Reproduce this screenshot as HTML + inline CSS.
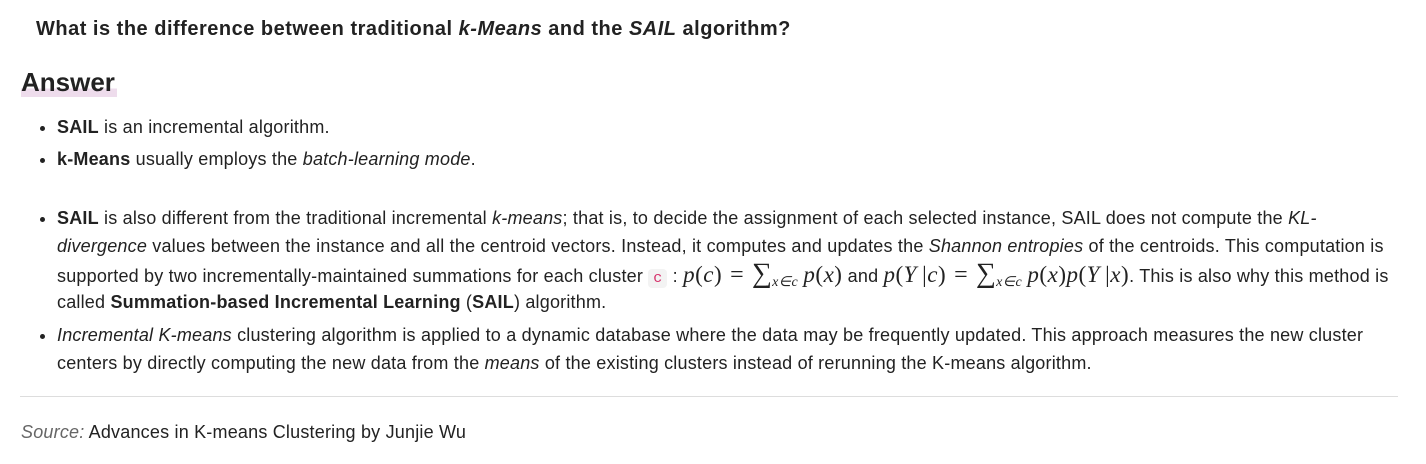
<!DOCTYPE html>
<html><head><meta charset="utf-8"><style>
body{margin:0;background:#fff;font-family:"Liberation Sans",Arial,sans-serif;color:#222;width:1426px;height:464px;overflow:hidden;position:relative}
.t{position:absolute;left:36px;top:18px;font-size:20px;letter-spacing:0.5px;font-weight:bold;white-space:nowrap}
.h{position:absolute;left:21px;top:67px;font-size:26px;font-weight:bold;line-height:30px;background:linear-gradient(transparent 72%,#eedcec 72%);padding-right:2px}
ul{position:absolute;left:0;margin:0;padding-left:57px;font-size:18px;letter-spacing:0.2px;width:1360px}
li{white-space:nowrap}
.l1 li{line-height:32px}
.l2 li{line-height:28px}
.m{font-family:"Liberation Serif",serif;font-style:italic;font-size:23px;letter-spacing:0.5px;line-height:1}
.n{font-style:normal}
.e{font-family:"Liberation Serif",serif;font-size:24px;padding:0 8px;line-height:1}
.code{font-family:"Liberation Mono",monospace;color:#d6336c;background:#f3f3f3;border-radius:4px;padding:1px 5px;font-size:15px;line-height:1}
sub{line-height:0;vertical-align:-4px}
.hr{position:absolute;left:20px;top:396px;width:1378px;border-top:1px solid #ddd}
.s{position:absolute;left:21px;top:422px;font-size:18px;letter-spacing:0.2px;white-space:nowrap}
.ml{display:inline-block;height:28px;vertical-align:top}
</style></head><body>
<div class="t">What is the difference between traditional <i>k-Means</i> and the <i>SAIL</i> algorithm?</div>
<div class="h">Answer</div>
<ul class="l1" style="top:111px"><li><b>SAIL</b> is an incremental algorithm.</li><li><b>k-Means</b> usually employs the <i>batch-learning mode</i>.</li></ul>
<ul class="l2" style="top:204px">
<li><b>SAIL</b> is also different from the traditional incremental <i>k-means</i>; that is, to decide the assignment of each selected instance, SAIL does not compute the <i>KL-</i><br><i>divergence</i> values between the instance and all the centroid vectors. Instead, it computes and updates the <i>Shannon entropies</i> of the centroids. This computation is<br><span class="ml">supported by two incrementally-maintained summations for each cluster <span class="code">c</span> : <span class="m">p</span><span class="m n">(</span><span class="m">c</span><span class="m n">)</span><span class="e">=</span><span class="e" style="padding:0;font-size:28px">∑</span><sub class="m" style="font-size:14px">x∈c</sub> <span class="m">p</span><span class="m n">(</span><span class="m">x</span><span class="m n">)</span> and <span class="m">p</span><span class="m n">(</span><span class="m">Y</span> <span class="m n">|</span><span class="m">c</span><span class="m n">)</span><span class="e">=</span><span class="e" style="padding:0;font-size:28px">∑</span><sub class="m" style="font-size:14px">x∈c</sub> <span class="m">p</span><span class="m n">(</span><span class="m">x</span><span class="m n">)</span><span class="m">p</span><span class="m n">(</span><span class="m">Y</span> <span class="m n">|</span><span class="m">x</span><span class="m n">)</span>. This is also why this method is</span><br>called <b>Summation-based Incremental Learning</b> (<b>SAIL</b>) algorithm.</li>
<li style="margin-top:5px"><i>Incremental K-means</i> clustering algorithm is applied to a dynamic database where the data may be frequently updated. This approach measures the new cluster<br>centers by directly computing the new data from the <i>means</i> of the existing clusters instead of rerunning the K-means algorithm.</li>
</ul>
<div class="hr"></div>
<div class="s"><i style="color:#666">Source:</i> Advances in K-means Clustering by Junjie Wu</div>
</body></html>
